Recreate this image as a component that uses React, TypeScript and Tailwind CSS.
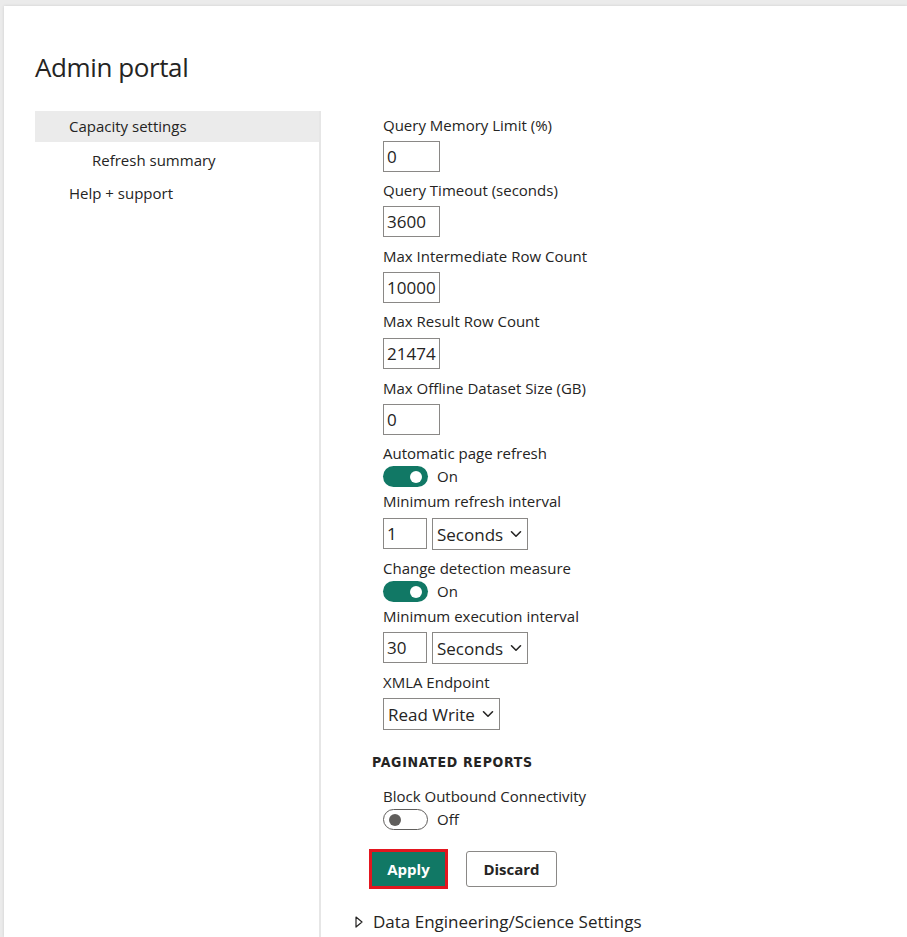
import React from 'react';

const font = { fontFamily: '"Open Sans", "Noto Sans", sans-serif' };

function TextBox({ value, width = 'w-[57px]' }: { value: string; width?: string }) {
  return (
    <div className={`${width} h-[31px] border border-[#8a8886] bg-white px-[3px] flex items-center text-[17px] text-[#252423] leading-none`}>
      {value}
    </div>
  );
}

function Chevron() {
  return (
    <svg width="12" height="8" viewBox="0 0 12 8" fill="none">
      <path d="M1.5 1.8 L6 6.2 L10.5 1.8" stroke="#252423" strokeWidth="1.6" strokeLinecap="round" strokeLinejoin="round" />
    </svg>
  );
}

function SelectBox({ value, width }: { value: string; width: string }) {
  return (
    <div className={`${width} h-[32px] border border-[#8a8886] bg-white pl-[4px] pr-[5px] flex items-center justify-between text-[17px] text-[#252423] leading-none`}>
      <span>{value}</span>
      <Chevron />
    </div>
  );
}

function Toggle({ on }: { on: boolean }) {
  return (
    <div className="flex items-center h-[21px]">
      {on ? (
        <div className="w-[45px] h-[21px] rounded-full bg-[#117865] flex items-center justify-end pr-[6px]">
          <div className="w-[12px] h-[12px] rounded-full bg-white" />
        </div>
      ) : (
        <div className="w-[45px] h-[21px] rounded-full bg-white border border-[#605e5c] flex items-center pl-[5px]">
          <div className="w-[12px] h-[12px] rounded-full bg-[#605e5c]" />
        </div>
      )}
      <span className="ml-[9px] text-[15px] text-[#252423]">{on ? 'On' : 'Off'}</span>
    </div>
  );
}

function Label({ children }: { children: React.ReactNode }) {
  return <div className="h-[20px] leading-[20px] text-[15px] text-[#252423] whitespace-nowrap">{children}</div>;
}

export default function App() {
  return (
    <div className="min-h-[937px] bg-[#ebebeb] pt-[6px] pl-[4px] overflow-hidden" style={font}>
      <div className="bg-white min-h-[931px] shadow-[0_0_3px_rgba(0,0,0,0.12)] pl-[31px]">
        <h1 className="pt-[43px] h-[105px] text-[26px] leading-[36px] text-[#252423] tracking-[-0.4px]">Admin portal</h1>

        <div className="flex">
          {/* Left nav */}
          <nav className="w-[284px] shrink-0 text-[15px] text-[#252423]">
            <div className="h-[31px] bg-[#ebebeb] pl-[34px] flex items-center">Capacity settings</div>
            <div className="h-[36px] pl-[57px] flex items-center">Refresh summary</div>
            <div className="h-[31px] pl-[34px] flex items-center">Help + support</div>
          </nav>

          <div className="w-[2px] bg-[#e6e6e6] self-stretch min-h-[826px]" />

          {/* Settings */}
          <div className="pl-[62px] pt-[4px]">
            <Label>Query Memory Limit (%)</Label>
            <div className="mt-[6px]"><TextBox value="0" /></div>
            <div className="mt-[8px]"><Label>Query Timeout (seconds)</Label></div>
            <div className="mt-[6px]"><TextBox value="3600" /></div>
            <div className="mt-[9px]"><Label>Max Intermediate Row Count</Label></div>
            <div className="mt-[6px]"><TextBox value="10000" /></div>
            <div className="mt-[8px]"><Label>Max Result Row Count</Label></div>
            <div className="mt-[7px]"><TextBox value="21474" /></div>
            <div className="mt-[9px]"><Label>Max Offline Dataset Size (GB)</Label></div>
            <div className="mt-[6px]"><TextBox value="0" /></div>
            <div className="mt-[8px]"><Label>Automatic page refresh</Label></div>
            <div className="mt-[3px]"><Toggle on /></div>
            <div className="mt-[4px]"><Label>Minimum refresh interval</Label></div>
            <div className="mt-[7px] flex gap-[5px]">
              <TextBox value="1" width="w-[44px]" />
              <SelectBox value="Seconds" width="w-[96px]" />
            </div>
            <div className="mt-[8px]"><Label>Change detection measure</Label></div>
            <div className="mt-[3px]"><Toggle on /></div>
            <div className="mt-[4px]"><Label>Minimum execution interval</Label></div>
            <div className="mt-[6px] flex gap-[5px]">
              <TextBox value="30" width="w-[44px]" />
              <SelectBox value="Seconds" width="w-[96px]" />
            </div>
            <div className="mt-[8px]"><Label>XMLA Endpoint</Label></div>
            <div className="mt-[6px]"><SelectBox value="Read Write" width="w-[117px]" /></div>

            <div
              className="-ml-[11px] mt-[22px] text-[14px] font-bold tracking-[0.7px] text-[#252423] h-[20px] leading-[20px]"
              style={{ fontFamily: '"DejaVu Sans Condensed", "Roboto", sans-serif' }}
            >
              PAGINATED REPORTS
            </div>
            <div className="mt-[14px]"><Label>Block Outbound Connectivity</Label></div>
            <div className="mt-[3px]"><Toggle on={false} /></div>

            <div className="mt-[19px] -ml-[14px] flex items-center gap-[18px]">
              <button className="w-[79px] h-[40px] border-[3px] border-[#e3161f] bg-[#117865] text-white text-[15px] font-bold">
                Apply
              </button>
              <button className="w-[91px] h-[36px] border border-[#8a8886] rounded-[3px] bg-white text-[#252423] text-[15px] font-bold">
                Discard
              </button>
            </div>

            <div className="mt-[20px] -ml-[28px] flex items-center gap-[10px] text-[17px] text-[#252423]">
              <svg width="8" height="12" viewBox="0 0 8 12" fill="none">
                <path d="M1 1 L7 6 L1 11 Z" stroke="#252423" strokeWidth="1.2" strokeLinejoin="round" />
              </svg>
              <span>Data Engineering/Science Settings</span>
            </div>
          </div>
        </div>
      </div>
    </div>
  );
}
